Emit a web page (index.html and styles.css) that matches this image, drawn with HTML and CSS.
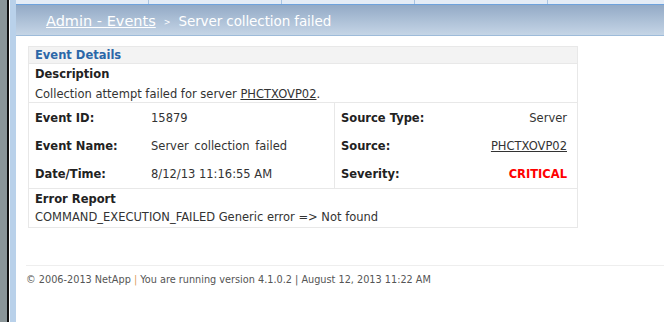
FILE: index.html
```html
<!DOCTYPE html>
<html lang="en">
<head>
  <meta charset="UTF-8" />
  <title>Admin - Events</title>
  <link rel="stylesheet" href="styles.css">
</head>
<body>
  <div class="frame">
    <div class="side"></div>
    <div class="page">
      <div class="tabs">
        <span class="tab"></span>
        <span class="tab"></span>
        <span class="tab"></span>
        <span class="tab"></span>
        <span class="tab last"></span>
      </div>
      <div class="title-bar">
        <a href="#" class="crumb">Admin - Events</a>
        <span class="sep">&gt;</span>
        <span class="current">Server collection failed</span>
      </div>

      <div class="content">
        <div class="panel">
          <div class="panel-head">Event Details</div>

          <div class="block">
            <div class="block-title">Description</div>
            <div class="block-text">Collection attempt failed for server <a href="#">PHCTXOVP02</a>.</div>
          </div>

          <div class="details">
            <div class="col">
              <div class="row"><span class="label">Event ID:</span><span class="val">15879</span></div>
              <div class="row"><span class="label">Event Name:</span><span class="val spaced">Server collection failed</span></div>
              <div class="row"><span class="label">Date/Time:</span><span class="val">8/12/13 11:16:55 AM</span></div>
            </div>
            <div class="col right">
              <div class="row"><span class="label">Source Type:</span><span class="val">Server</span></div>
              <div class="row"><span class="label">Source:</span><a href="#" class="val">PHCTXOVP02</a></div>
              <div class="row"><span class="label">Severity:</span><span class="val critical">CRITICAL</span></div>
            </div>
          </div>

          <div class="block last">
            <div class="block-title">Error Report</div>
            <div class="block-text">COMMAND_EXECUTION_FAILED Generic error =&gt; Not found</div>
          </div>
        </div>
      </div>

      <div class="footer">
        © 2006-2013 NetApp <span class="bar">|</span> You are running version 4.1.0.2 | August 12, 2013 11:22 AM
      </div>
    </div>
  </div>
</body>
</html>
```

FILE: styles.css
```css
* {
  margin: 0;
  padding: 0;
  box-sizing: border-box;
}

body {
  background: #fff;
  font-family: 'DejaVu Sans', Verdana, sans-serif;
  font-size: 11.5px;
  color: #333;
}

.frame {
  display: flex;
  height: 322px;
}

.side {
  width: 16px;
  flex-shrink: 0;
  background: #b9d1ea;
  border-left: 7px solid #8a9598;
  box-shadow: inset 2px 0 0 #111, inset 3px 0 0 #fff;
}

.page {
  flex: 1;
  display: flex;
  flex-direction: column;
}

/* top tab strip */
.tabs {
  display: flex;
  height: 5px;
  background: #e4ecf6;
  border-bottom: 1px solid #6ea2dc;
}

.tab {
  width: 133px;
  border-right: 1px solid #a9c4e2;
}

.tab.last {
  border-right: none;
  flex: 1;
}

.title-bar {
  height: 31px;
  display: flex;
  align-items: center;
  padding: 2px 0 0 30px;
  background: linear-gradient(#93aac6, #c5d5e6);
  border-bottom: 1px solid #9dbbd9;
  color: #fff;
  font-size: 14.5px;
}

.crumb {
  color: #fff;
}

.sep {
  font-size: 8px;
  margin: 3px 8px 0 8px;
}

.current {
  font-size: 13.5px;
  letter-spacing: -0.1px;
}

.content {
  padding: 10px 0 0 12px;
}

.panel {
  width: 550px;
  border: 1px solid #e8e8e8;
}

.panel-head {
  height: 17px;
  line-height: 17px;
  padding-left: 6px;
  background: #f3f3f3;
  border-bottom: 1px solid #e8e8e8;
  color: #2b67a8;
  font-weight: bold;
}

.block {
  padding: 1px 6px 0;
  height: 39px;
  border-bottom: 1px solid #e8e8e8;
}

.block.last {
  height: 38px;
  border-bottom: none;
}

.block-title {
  font-weight: bold;
  color: #222;
  line-height: 18px;
}

.block-text {
  line-height: 20px;
  padding-top: 1px;
}

.block.last .block-text {
  line-height: 18px;
  padding-top: 0;
}

a {
  color: #333;
}

.details {
  display: flex;
  border-bottom: 1px solid #e8e8e8;
}

.col {
  width: 305px;
  padding-top: 1px;
}

.col.right {
  flex: 1;
  border-left: 1px solid #e8e8e8;
}

.row {
  display: flex;
  align-items: center;
  height: 28px;
  padding: 0 10px 0 6px;
}

.label {
  font-weight: bold;
  color: #222;
  width: 116px;
}

.col.right .label {
  flex: 1;
}

.spaced {
  word-spacing: 2px;
}

.critical {
  color: #f00;
  font-weight: bold;
}

.footer {
  margin: 37px 0 0 10px;
  padding-top: 7px;
  border-top: 1px solid #eee;
  font-family: 'DejaVu Sans Condensed', Tahoma, sans-serif;
  font-size: 10.8px;
  color: #555;
}

.footer .bar {
  color: #e0a060;
}
```
